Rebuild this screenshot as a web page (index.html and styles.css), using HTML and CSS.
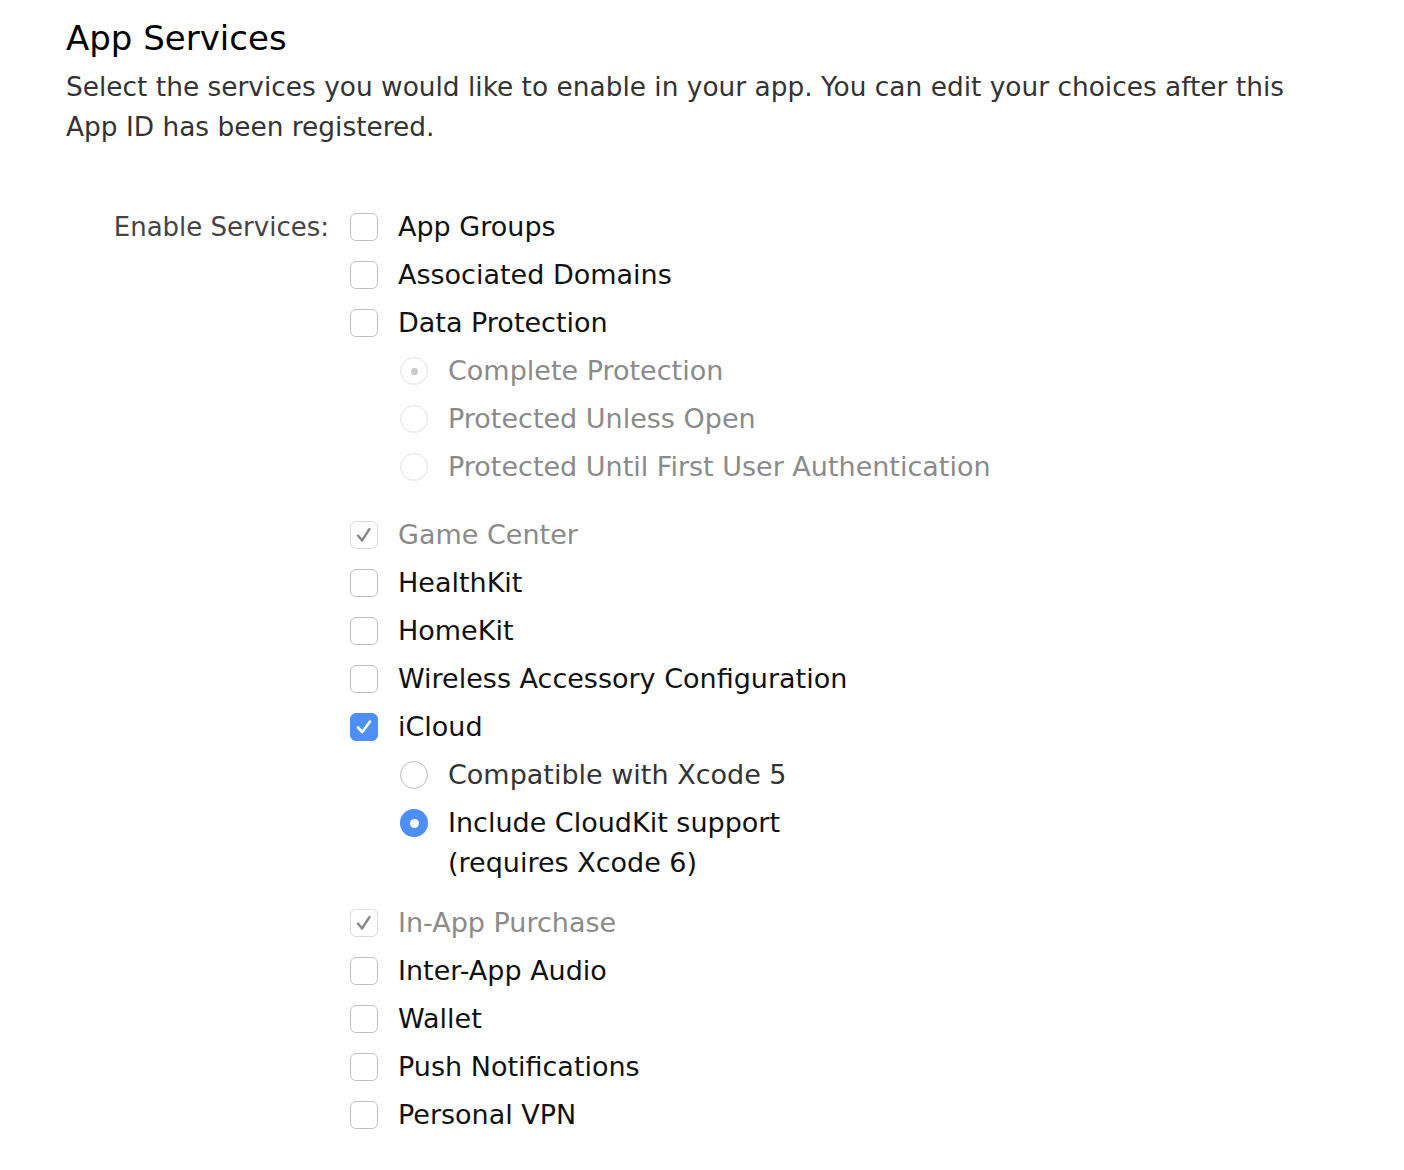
FILE: index.html
```html
<!DOCTYPE html>
<html>
<head>
<meta charset="utf-8">
<link rel="stylesheet" href="styles.css">
</head>
<body>
<div class="page">
  <h1 class="title">App Services</h1>
  <p class="intro">Select the services you would like to enable in your app. You can edit your choices after this App ID has been registered.</p>

  <div class="form">
    <div class="form-label">Enable Services:</div>
    <div class="options">
      <div class="group">
        <div class="row"><span class="cb"></span><span class="lbl">App Groups</span></div>
        <div class="row"><span class="cb"></span><span class="lbl">Associated Domains</span></div>
        <div class="row"><span class="cb"></span><span class="lbl">Data Protection</span></div>
        <div class="sub">
          <div class="row"><span class="rb rb-dis rb-dot"></span><span class="lbl lbl-dis">Complete Protection</span></div>
          <div class="row"><span class="rb rb-dis"></span><span class="lbl lbl-dis">Protected Unless Open</span></div>
          <div class="row"><span class="rb rb-dis"></span><span class="lbl lbl-dis">Protected Until First User Authentication</span></div>
        </div>
      </div>
      <div class="group">
        <div class="row"><span class="cb cb-dis"><svg class="tick" viewBox="0 0 28 28" width="28" height="28"><path d="M8 14.5 L12 19.5 L19.5 8" fill="none" stroke="#8a8a8a" stroke-width="2.4" stroke-linecap="round" stroke-linejoin="round"/></svg></span><span class="lbl lbl-dis">Game Center</span></div>
        <div class="row"><span class="cb"></span><span class="lbl">HealthKit</span></div>
        <div class="row"><span class="cb"></span><span class="lbl">HomeKit</span></div>
        <div class="row"><span class="cb"></span><span class="lbl">Wireless Accessory Configuration</span></div>
        <div class="row"><span class="cb cb-on"><svg class="tick" viewBox="0 0 28 28" width="28" height="28"><path d="M8 14.5 L12.3 19 L20 8.5" fill="none" stroke="#ffffff" stroke-width="2.6" stroke-linecap="round" stroke-linejoin="round"/></svg></span><span class="lbl">iCloud</span></div>
        <div class="sub">
          <div class="row"><span class="rb"></span><span class="lbl lbl-soft">Compatible with Xcode 5</span></div>
          <div class="row"><span class="rb rb-on"></span><span class="lbl">Include CloudKit support<br>(requires Xcode 6)</span></div>
        </div>
      </div>
      <div class="group group-tight">
        <div class="row"><span class="cb cb-dis"><svg class="tick" viewBox="0 0 28 28" width="28" height="28"><path d="M8 14.5 L12 19.5 L19.5 8" fill="none" stroke="#8a8a8a" stroke-width="2.4" stroke-linecap="round" stroke-linejoin="round"/></svg></span><span class="lbl lbl-dis">In-App Purchase</span></div>
        <div class="row"><span class="cb"></span><span class="lbl">Inter-App Audio</span></div>
        <div class="row"><span class="cb"></span><span class="lbl">Wallet</span></div>
        <div class="row"><span class="cb"></span><span class="lbl">Push Notifications</span></div>
        <div class="row"><span class="cb"></span><span class="lbl">Personal VPN</span></div>
      </div>
    </div>
  </div>
</div>
</body>
</html>
```

FILE: styles.css
```css
html, body {
  margin: 0;
  padding: 0;
  background: #ffffff;
}
body {
  font-family: "DejaVu Sans", "Liberation Sans", sans-serif;
  color: #111;
}
.page {
  padding: 14px 0 0 66px;
}
.title {
  margin: 0;
  font-size: 34px;
  font-weight: 400;
  line-height: 48px;
  color: #000;
}
.intro {
  margin: 5px 0 0;
  font-size: 26.4px;
  line-height: 40px;
  color: #333;
  max-width: 1235px;
}
.form {
  display: flex;
  margin-top: 60px;
}
.form-label {
  width: 263px;
  text-align: right;
  font-size: 26px;
  line-height: 40px;
  color: #444;
  flex: none;
}
.options {
  margin-left: 21px;
  display: flex;
  flex-direction: column;
  gap: 28px;
}
.group {
  display: flex;
  flex-direction: column;
  gap: 8px;
}
.group-tight {
  margin-top: -8px;
}
.sub {
  display: flex;
  flex-direction: column;
  gap: 8px;
  padding-left: 50px;
}
.row {
  display: flex;
  align-items: flex-start;
}
.lbl {
  font-size: 27px;
  line-height: 40px;
  color: #111;
  margin-left: 20px;
}
.lbl-dis {
  color: #8a8a8a;
}
.lbl-soft {
  color: #333;
}
.cb {
  flex: none;
  width: 28px;
  height: 28px;
  box-sizing: border-box;
  border: 1px solid #c0c0c0;
  border-radius: 6px;
  margin-top: 6px;
  background: #fff;
  display: block;
  overflow: visible;
}
.tick {
  display: block;
  margin: -1px;
  flex: none;
}
.cb-dis {
  border-color: #dadada;
}
.cb-on {
  border-color: #4d8ff5;
  background: #4d8ff5;
}
.rb {
  flex: none;
  width: 28px;
  height: 28px;
  box-sizing: border-box;
  border: 1px solid #bdbdbd;
  border-radius: 50%;
  margin-top: 6px;
  background: #fff;
  display: flex;
  align-items: center;
  justify-content: center;
  box-shadow: inset 0 -1px 1px rgba(0,0,0,0.04);
}
.rb-dis {
  border-color: #e4e4e4;
}
.rb-dot::after {
  content: "";
  width: 7px;
  height: 7px;
  border-radius: 50%;
  background: #c8c8c8;
}
.rb-on {
  border: none;
  background: #4d8ff5;
}
.rb-on::after {
  content: "";
  width: 9px;
  height: 9px;
  border-radius: 50%;
  background: #fff;
}
```
